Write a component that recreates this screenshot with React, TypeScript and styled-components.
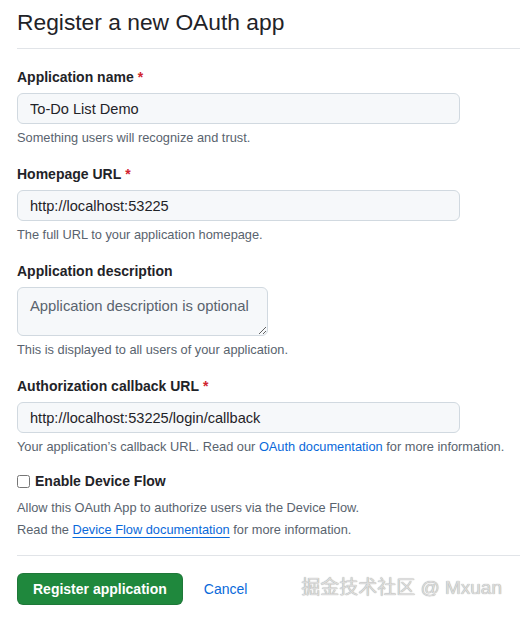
import styled, { createGlobalStyle } from "styled-components"

const GlobalStyle = createGlobalStyle`
  body {
    margin: 0;
    background: #ffffff;
    color: #1f2328;
    font-family: "Liberation Sans", Arial, "Noto Sans CJK SC", sans-serif;
  }
`

const colors = {
  text: "#1f2328",
  muted: "#59636e",
  border: "#d1d9e0",
  inputBg: "#f6f8fa",
  link: "#0969da",
  danger: "#d1242f",
  green: "#1f883d",
}

const Page = styled.div`
  position: relative;
  width: 520px;
  height: 622px;
  overflow: hidden;
  padding-left: 17px;
  box-sizing: border-box;
`

const Title = styled.h1`
  margin: 0;
  padding: 8px 0 12px;
  font-size: 22.8px;
  font-weight: 400;
  line-height: 28px;
  border-bottom: 1px solid #e1e4e8;
`

const Form = styled.form`
  padding-top: 18px;
`

const Group = styled.div`
  margin-bottom: 17px;
`

const Label = styled.label`
  display: block;
  font-size: 14px;
  font-weight: 700;
  line-height: 20px;
  margin-bottom: 6px;
`

const Required = styled.span`
  color: ${colors.danger};
  margin-left: 4px;
`

const Input = styled.input`
  display: block;
  box-sizing: border-box;
  width: 443px;
  height: 31px;
  padding: 0 12px;
  border: 1px solid ${colors.border};
  border-radius: 6px;
  background: ${colors.inputBg};
  color: ${colors.text};
  font-family: inherit;
  font-size: 14.6px;
  outline: none;
`

const TextArea = styled.textarea`
  display: block;
  box-sizing: border-box;
  width: 251px;
  height: 49px;
  padding: 8px 12px;
  border: 1px solid ${colors.border};
  border-radius: 6px;
  background: ${colors.inputBg};
  font-family: inherit;
  font-size: 14.8px;
  line-height: 20px;
  resize: both;
  outline: none;
  &::placeholder {
    color: #59636e;
  }
`

const Hint = styled.p`
  margin: 5px 0 0;
  font-size: 12.8px;
  line-height: 18px;
  color: ${colors.muted};
  white-space: nowrap;
`

const Link = styled.a<{ $underline?: boolean }>`
  color: ${colors.link};
  text-decoration: ${(p) => (p.$underline ? "underline" : "none")};
  text-underline-offset: 3px;
`

const CheckRow = styled.label`
  display: flex;
  align-items: center;
  gap: 5px;
  margin-top: -2px;
  font-size: 14px;
  font-weight: 700;
  line-height: 20px;
`

const Checkbox = styled.input`
  margin: 0;
  width: 13px;
  height: 13px;
`

const Note = styled.p<{ $gap: number }>`
  margin: ${(p) => p.$gap}px 0 0;
  font-size: 12.8px;
  line-height: 18px;
  color: ${colors.muted};
`

const Divider = styled.hr`
  border: none;
  border-top: 1px solid #e1e4e8;
  margin: 16px 0 17px;
`

const Actions = styled.div`
  display: flex;
  align-items: center;
  gap: 21px;
`

const PrimaryButton = styled.button`
  height: 32px;
  padding: 0 15px;
  border: 1px solid rgba(31, 35, 40, 0.15);
  border-radius: 6px;
  background: ${colors.green};
  color: #ffffff;
  font-family: inherit;
  font-size: 14px;
  font-weight: 700;
`

const CancelLink = styled.a`
  color: ${colors.link};
  font-size: 14px;
  text-decoration: none;
`

const Watermark = styled.div`
  position: absolute;
  right: 18px;
  bottom: 23px;
  font-size: 19px;
  color: #dcdcdc;
  text-shadow: 0 0 1px #8a8a8a;
  font-family: "Liberation Sans", "Noto Sans CJK SC", sans-serif;
`

const App = () => {
  return (
    <Page>
      <GlobalStyle />
      <Title>Register a new OAuth app</Title>
      <Form>
        <Group>
          <Label>
            Application name<Required>*</Required>
          </Label>
          <Input type="text" defaultValue="To-Do List Demo" />
          <Hint>Something users will recognize and trust.</Hint>
        </Group>
        <Group>
          <Label>
            Homepage URL<Required>*</Required>
          </Label>
          <Input type="text" defaultValue="http://localhost:53225" />
          <Hint>The full URL to your application homepage.</Hint>
        </Group>
        <Group>
          <Label>Application description</Label>
          <TextArea placeholder="Application description is optional" />
          <Hint>This is displayed to all users of your application.</Hint>
        </Group>
        <Group>
          <Label>
            Authorization callback URL<Required>*</Required>
          </Label>
          <Input type="text" defaultValue="http://localhost:53225/login/callback" />
          <Hint>
            Your application’s callback URL. Read our <Link>OAuth documentation</Link> for more
            information.
          </Hint>
        </Group>
        <CheckRow>
          <Checkbox type="checkbox" />
          Enable Device Flow
        </CheckRow>
        <Note $gap={8}>Allow this OAuth App to authorize users via the Device Flow.</Note>
        <Note $gap={4}>
          Read the <Link $underline>Device Flow documentation</Link> for more information.
        </Note>
        <Divider />
        <Actions>
          <PrimaryButton type="button">Register application</PrimaryButton>
          <CancelLink>Cancel</CancelLink>
        </Actions>
      </Form>
      <Watermark>掘金技术社区 @ Mxuan</Watermark>
    </Page>
  )
}

export default App
